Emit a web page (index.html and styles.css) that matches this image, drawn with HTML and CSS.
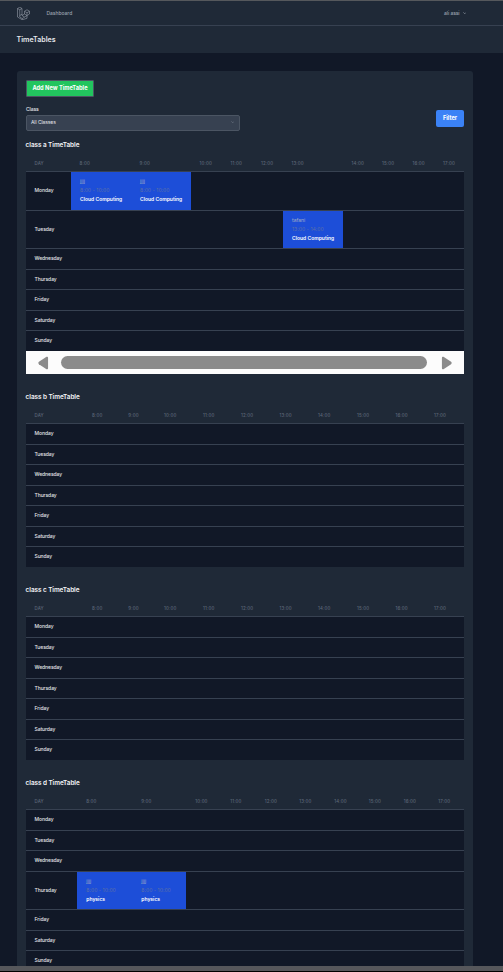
FILE: index.html
```html
<!DOCTYPE html>
<html lang="en">
<head>
<meta charset="utf-8">
<title>TimeTables</title>
<link rel="stylesheet" href="styles.css">
</head>
<body>
<nav class="nav">
  <svg class="logo" viewBox="0 0 50 52" fill="none" stroke="#9ca3af" stroke-width="2.3" stroke-linejoin="round"><path d="M1 6 10 1l9 5v28l10-6V17l10-6 10 6v11l-10 6v11L20 51 1 40zM1 6l9 5 9-5M10 11v29l10 6 19-12M20 51v-6M10 34l9-5M29 17l10 6 10-6M39 23v11M29 28l10 6M19 34l10 6"/></svg>
  <a class="nav-link">Dashboard</a>
  <div class="user"><span>ali assi</span><svg class="chev" viewBox="0 0 10 6"><path d="M1 1l4 4 4-4" fill="none" stroke="#9ca3af" stroke-width="1.8"/></svg></div>
</nav>
<header class="page-header"><h1>TimeTables</h1></header>
<main class="card">
  <button class="add">Add New TimeTable</button>
  <form class="filters">
    <div class="field"><label>Class</label>
      <div class="select"><span>All Classes</span><svg class="chev" viewBox="0 0 10 6"><path d="M1 1l4 4 4-4" fill="none" stroke="#7b8494" stroke-width="1.5"/></svg></div>
    </div>
    <button class="filter" type="button">Filter</button>
  </form>

  <section class="timetable table-a">
    <h2>class a TimeTable</h2>
    <div class="row head"><span>DAY</span><span>8:00</span><span>9:00</span><span>10:00</span><span>11:00</span><span>12:00</span><span>13:00</span><span>14:00</span><span>15:00</span><span>16:00</span><span>17:00</span></div>
    <div class="row lesson first"><b>Monday</b>
      <div class="slot"><i>jjjj</i><em>8:00 - 10:00</em><strong>Cloud Computing</strong></div>
      <div class="slot"><i>jjjj</i><em>8:00 - 10:00</em><strong>Cloud Computing</strong></div></div>
    <div class="row lesson"><b>Tuesday</b>
      <div class="slot at-13"><i>tafani</i><em>13:00 - 14:00</em><strong>Cloud Computing</strong></div></div>
    <div class="row tall"><b>Wednesday</b></div>
    <div class="row"><b>Thursday</b></div>
    <div class="row tall"><b>Friday</b></div>
    <div class="row"><b>Saturday</b></div>
    <div class="row last"><b>Sunday</b></div>
    <div class="scrollbar">
      <svg class="arrow" viewBox="0 0 12 15"><path d="M1 6.2 9.3.8Q11 0 11 2v11q0 2-1.7 1.2L1 8.8Q-.3 7.5 1 6.2z" fill="#8b8b8b"/></svg>
      <div class="thumb"></div>
      <svg class="arrow" viewBox="0 0 12 15"><path d="M11 6.2 2.7.8Q1 0 1 2v11q0 2 1.7 1.2L11 8.8q1.3-1.3 0-2.6z" fill="#8b8b8b"/></svg>
    </div>
  </section>

  <section class="timetable table-b">
    <h2>class b TimeTable</h2>
    <div class="row head"><span>DAY</span><span>8:00</span><span>9:00</span><span>10:00</span><span>11:00</span><span>12:00</span><span>13:00</span><span>14:00</span><span>15:00</span><span>16:00</span><span>17:00</span></div>
    <div class="row tall"><b>Monday</b></div>
    <div class="row"><b>Tuesday</b></div>
    <div class="row tall"><b>Wednesday</b></div>
    <div class="row"><b>Thursday</b></div>
    <div class="row tall"><b>Friday</b></div>
    <div class="row"><b>Saturday</b></div>
    <div class="row last"><b>Sunday</b></div>
  </section>

  <section class="timetable table-b">
    <h2>class c TimeTable</h2>
    <div class="row head"><span>DAY</span><span>8:00</span><span>9:00</span><span>10:00</span><span>11:00</span><span>12:00</span><span>13:00</span><span>14:00</span><span>15:00</span><span>16:00</span><span>17:00</span></div>
    <div class="row tall"><b>Monday</b></div>
    <div class="row"><b>Tuesday</b></div>
    <div class="row tall"><b>Wednesday</b></div>
    <div class="row"><b>Thursday</b></div>
    <div class="row tall"><b>Friday</b></div>
    <div class="row"><b>Saturday</b></div>
    <div class="row last"><b>Sunday</b></div>
  </section>

  <section class="timetable table-d">
    <h2>class d TimeTable</h2>
    <div class="row head"><span>DAY</span><span>8:00</span><span>9:00</span><span>10:00</span><span>11:00</span><span>12:00</span><span>13:00</span><span>14:00</span><span>15:00</span><span>16:00</span><span>17:00</span></div>
    <div class="row tall"><b>Monday</b></div>
    <div class="row"><b>Tuesday</b></div>
    <div class="row tall"><b>Wednesday</b></div>
    <div class="row lesson"><b>Thursday</b>
      <div class="slot"><i>jjjj</i><em>8:00 - 10:00</em><strong>physics</strong></div>
      <div class="slot"><i>jjjj</i><em>8:00 - 10:00</em><strong>physics</strong></div></div>
    <div class="row tall"><b>Friday</b></div>
    <div class="row"><b>Saturday</b></div>
    <div class="row last"><b>Sunday</b></div>
  </section>
</main>
<footer class="window-edge"></footer>
</body>
</html>
```
FILE: styles.css
```css
* { box-sizing: border-box; }
body {
  margin: 0;
  height: 972px;
  overflow: hidden;
  display: flex;
  flex-direction: column;
  background: #111827;
  font-family: Inter, "Liberation Sans", sans-serif;
  font-size: 5px;
  color: #e5e7eb;
  white-space: nowrap;
}
h1, h2 { margin: 0; font-weight: 600; }
button { border: 0; padding: 0; font: inherit; font-weight: 700; color: #fff; }

.nav {
  flex: none;
  height: 26px;
  display: flex;
  align-items: center;
  padding: 0 37px 0 17px;
  background: #1f2937;
  border-top: 1px solid #55585c;
  border-bottom: 1px solid #374151;
  color: #9ca3af;
  font-weight: 500;
}
.logo { width: 13px; height: 13px; }
.nav-link { margin-left: 16.5px; letter-spacing: -.04px; }
.user { margin-left: auto; display: flex; align-items: center; gap: 3px; letter-spacing: -.1px; }
.chev { width: 3.5px; height: 2.2px; }
.page-header {
  flex: none;
  height: 27px;
  padding-left: 16.5px;
  display: flex;
  align-items: center;
  background: #1f2937;
}
.page-header h1 { font-size: 7.1px; }

.card {
  flex: 1;
  min-height: 0;
  overflow: hidden;
  margin: 18px 30px 0 17px;
  padding: 9px 9px 0;
  background: #1f2937;
  border-radius: 3px 3px 0 0;
}
.add {
  display: block;
  width: 68px;
  height: 17px;
  padding-bottom: 2px;
  background: #22c55e;
  border: 1px solid #4b5563;
  border-radius: 1px;
  font-size: 5.7px;
}
.filters {
  display: flex;
  justify-content: space-between;
  height: 34px;
  padding-top: 8px;
}
.field label { display: block; height: 10px; line-height: 8px; font-weight: 500; letter-spacing: -.1px; }
.select {
  width: 214px;
  height: 16px;
  display: flex;
  align-items: center;
  justify-content: space-between;
  padding: 0 5px 2px 4px;
  background: #374151;
  border: 1px solid #4b5563;
  border-radius: 2px;
  letter-spacing: -.1px;
}
.filter {
  width: 28px;
  height: 17px;
  margin-top: 5px;
  padding-bottom: 2px;
  background: #3b82f6;
  border-radius: 2px;
  font-size: 5.7px;
}

.timetable { margin-bottom: 9px; }
.timetable h2 { height: 24px; line-height: 28px; font-size: 6.4px; letter-spacing: -.06px; color: #f3f4f6; text-indent: -.4px; }
.row {
  display: grid;
  height: 20px;
  align-items: center;
  background: #111827;
  border-bottom: 1px solid #374151;
}
.row.tall { height: 21px; }
.row.last { height: 20px; border: 0; }
.row.lesson { height: 38px; align-items: stretch; }
.row.lesson.first { height: 39px; }
.row > span, .row > b { padding-left: 8.5px; }
.row > b { font-weight: 500; align-self: center; padding-bottom: 1px; letter-spacing: -.06px; }
.row.tall > b, .row.last > b { padding-bottom: 2.5px; }
.row.lesson.first > b { padding-bottom: 2px; }
.row.head {
  height: 17px;
  background: #1f2937;
  font-size: 4.4px;
  font-weight: 500;
  color: #5d6777;
  letter-spacing: .15px;
}
.table-a .row { grid-template-columns: 45px 60px 60px 31px 30.5px 30.5px 60px 30.5px 30.5px 30.5px 29.5px; }
.table-b .row { grid-template-columns: 57.5px 36.3px 35.7px 39px 38px 38.5px 38.5px 39px 38.5px 38.5px 38.5px; }
.table-d .row { grid-template-columns: 51px 55px 54px 35px 34.5px 34.5px 35px 34.5px 35px 34.5px 35px; }

.slot {
  display: flex;
  flex-direction: column;
  padding: 4.5px 0 0 9px;
  background: #1d4ed8;
  line-height: 9px;
}
.slot.at-13 { grid-column: 7; }
.table-d .slot { padding-left: 9.3px; }
.table-d .head span:nth-child(n+2) { padding-left: 9.2px; }
.slot i, .slot em { font-style: normal; }
.slot i { color: #a3adc4; }
.slot em { color: #5b6fa8; letter-spacing: .05px; }
.slot strong { font-weight: 600; color: #fff; }

.scrollbar {
  height: 23px;
  display: flex;
  align-items: center;
  gap: 12px;
  padding: 0 12px;
  background: #fcfcfc;
}
.arrow { width: 11px; height: 14px; flex: none; }
.arrow:last-child { margin-left: 2px; }
.thumb { flex: 1; height: 13px; border-radius: 7px; background: #8b8b8b; }

.window-edge { flex: none; height: 6px; background: #56575b; border-bottom: 1px solid #000; }
```
